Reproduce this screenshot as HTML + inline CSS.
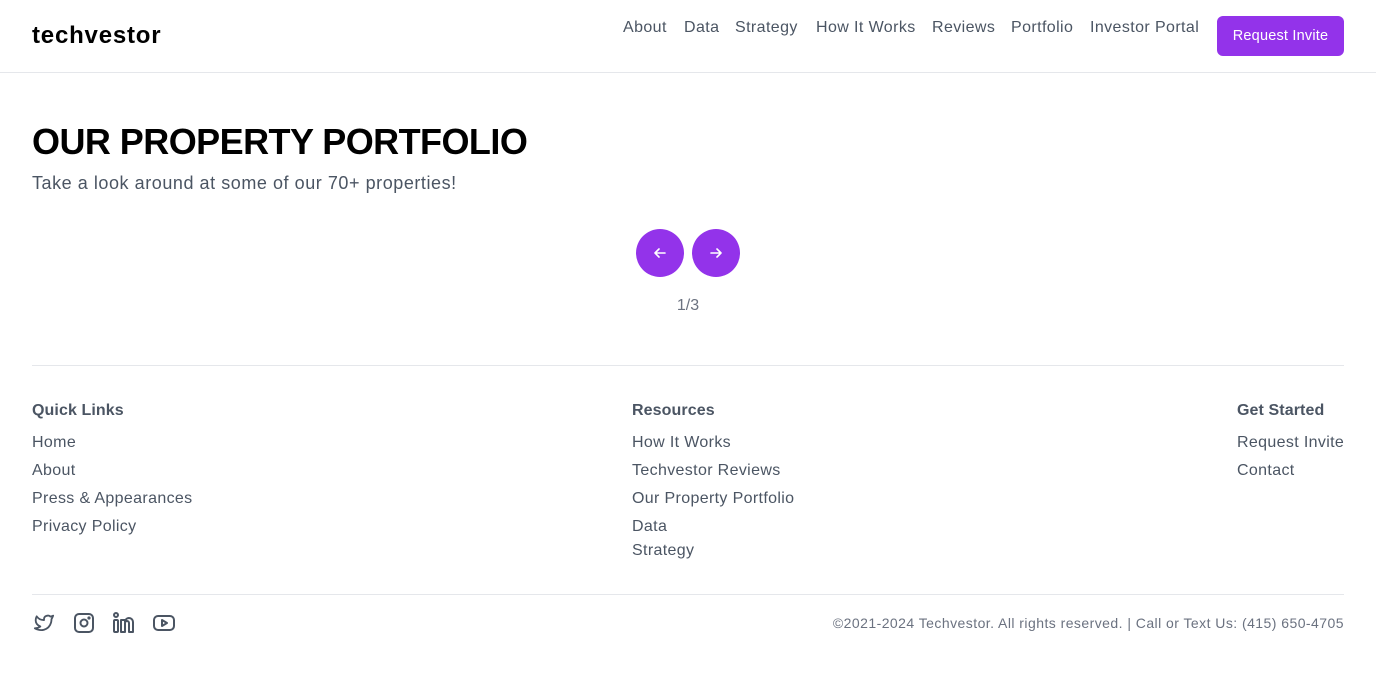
<!DOCTYPE html>
<html><head><meta charset="utf-8"><style>
*{margin:0;padding:0;box-sizing:border-box}
body{width:1376px;height:699px;background:#fff;font-family:"Liberation Sans",sans-serif;color:#4b5563;position:relative;overflow:hidden}
.a{position:absolute;white-space:nowrap}
.logo{left:32px;top:22px;font-size:24px;font-weight:bold;color:#000;letter-spacing:0.8px}
.nav{top:19px;font-size:16px;color:#4b5563;letter-spacing:0.4px}
.btn{left:1217px;top:16px;width:127px;height:40px;background:#9333ea;border-radius:6px;color:#fff;font-size:14.5px;line-height:40px;text-align:center;letter-spacing:0.2px}
.hl{position:absolute;left:0;right:0;height:1px;background:#e5e7eb}
h1{position:absolute;left:32px;top:121px;font-size:36px;font-weight:bold;color:#000;letter-spacing:-0.55px}
.sub{left:32px;top:173px;font-size:18px;color:#4b5563;letter-spacing:0.55px}
.circ{position:absolute;top:229px;width:48px;height:48px;border-radius:50%;background:#9333ea}
.circ svg{position:absolute;left:17px;top:17px}
.fh{font-size:16px;font-weight:bold;color:#4b5563;top:402px;letter-spacing:0.1px}
.fl{font-size:16px;color:#4b5563;letter-spacing:0.35px}
</style></head><body>
<div class="a logo">techvestor</div>
<div class="a nav" style="left:623px">About</div>
<div class="a nav" style="left:684px">Data</div>
<div class="a nav" style="left:735px">Strategy</div>
<div class="a nav" style="left:816px">How It Works</div>
<div class="a nav" style="left:932px">Reviews</div>
<div class="a nav" style="left:1011px">Portfolio</div>
<div class="a nav" style="left:1090px">Investor Portal</div>
<div class="a btn">Request Invite</div>
<div class="hl" style="top:72px"></div>
<h1>OUR PROPERTY PORTFOLIO</h1>
<div class="a sub">Take a look around at some of our 70+ properties!</div>
<div class="circ" style="left:636px"><svg width="14" height="14" viewBox="0 0 14 14" fill="none" stroke="#fff" stroke-width="1.6" stroke-linecap="round" stroke-linejoin="round"><path d="M12 7H2M6 3L2 7l4 4"/></svg></div>
<div class="circ" style="left:692px"><svg width="14" height="14" viewBox="0 0 14 14" fill="none" stroke="#fff" stroke-width="1.6" stroke-linecap="round" stroke-linejoin="round"><path d="M2 7h10M8 3l4 4-4 4"/></svg></div>
<div class="a" style="left:0;width:1376px;text-align:center;top:297px;font-size:16px;color:#6b7280">1/3</div>
<div class="hl" style="top:365px;left:32px;right:32px"></div>
<div class="a fh" style="left:32px">Quick Links</div>
<div class="a fl" style="left:32px;top:434px">Home</div>
<div class="a fl" style="left:32px;top:462px">About</div>
<div class="a fl" style="left:32px;top:490px">Press &amp; Appearances</div>
<div class="a fl" style="left:32px;top:518px">Privacy Policy</div>
<div class="a fh" style="left:632px">Resources</div>
<div class="a fl" style="left:632px;top:434px">How It Works</div>
<div class="a fl" style="left:632px;top:462px">Techvestor Reviews</div>
<div class="a fl" style="left:632px;top:490px">Our Property Portfolio</div>
<div class="a fl" style="left:632px;top:518px">Data</div>
<div class="a fl" style="left:632px;top:542px">Strategy</div>
<div class="a fh" style="left:1237px">Get Started</div>
<div class="a fl" style="left:1237px;top:434px">Request Invite</div>
<div class="a fl" style="left:1237px;top:462px">Contact</div>
<div class="hl" style="top:594px;left:32px;right:32px"></div>
<svg class="a" style="left:32px;top:612px" width="24" height="22" viewBox="0 0 24 24" fill="none" stroke="#4b5563" stroke-width="2" stroke-linejoin="round"><path d="M22 4.01c-1 .49-1.98.69-3 .99-1.12-1.26-2.78-1.33-4.38-.73S11.97 6.1 12 7.8v1c-3.25.08-6.14-1.4-8-4 0 0-4.19 7.44 4 11-1.87 1.25-3.74 2.1-6 2 3.3 1.8 6.9 2.42 10.02 1.52 3.58-1.04 6.52-3.72 7.65-7.73.34-1.220.5-2.48.5-3.75 0-.25 1.51-2.770 1.83-3.84z"/></svg>
<svg class="a" style="left:72px;top:611px" width="24" height="24" viewBox="0 0 24 24" fill="none" stroke="#4b5563" stroke-width="2"><rect x="3" y="3" width="18" height="18" rx="4"/><circle cx="12" cy="12" r="3.5"/><circle cx="17" cy="7" r=".6" fill="#4b5563"/></svg>
<svg class="a" style="left:112px;top:611px" width="24" height="24" viewBox="0 0 24 24" fill="none" stroke="#4b5563" stroke-width="2" stroke-linejoin="round" stroke-linecap="round"><rect x="2" y="9" width="4" height="12" rx="1"/><circle cx="4" cy="4" r="2"/><path d="M9 21V9h4v2a4 4 0 0 1 8 0v10h-4v-9a1.5 1.5 0 0 0-4 0v9z"/></svg>
<svg class="a" style="left:152px;top:611px" width="24" height="24" viewBox="0 0 24 24" fill="none" stroke="#4b5563" stroke-width="2" stroke-linejoin="round"><rect x="2" y="5" width="20" height="14" rx="4"/><path d="M10 9l5 3-5 3z"/></svg>
<div class="a" style="right:32px;top:615px;font-size:14px;color:#6b7280;letter-spacing:0.45px">©2021-2024 Techvestor. All rights reserved. | Call or Text Us: (415) 650-4705</div>
</body></html>
